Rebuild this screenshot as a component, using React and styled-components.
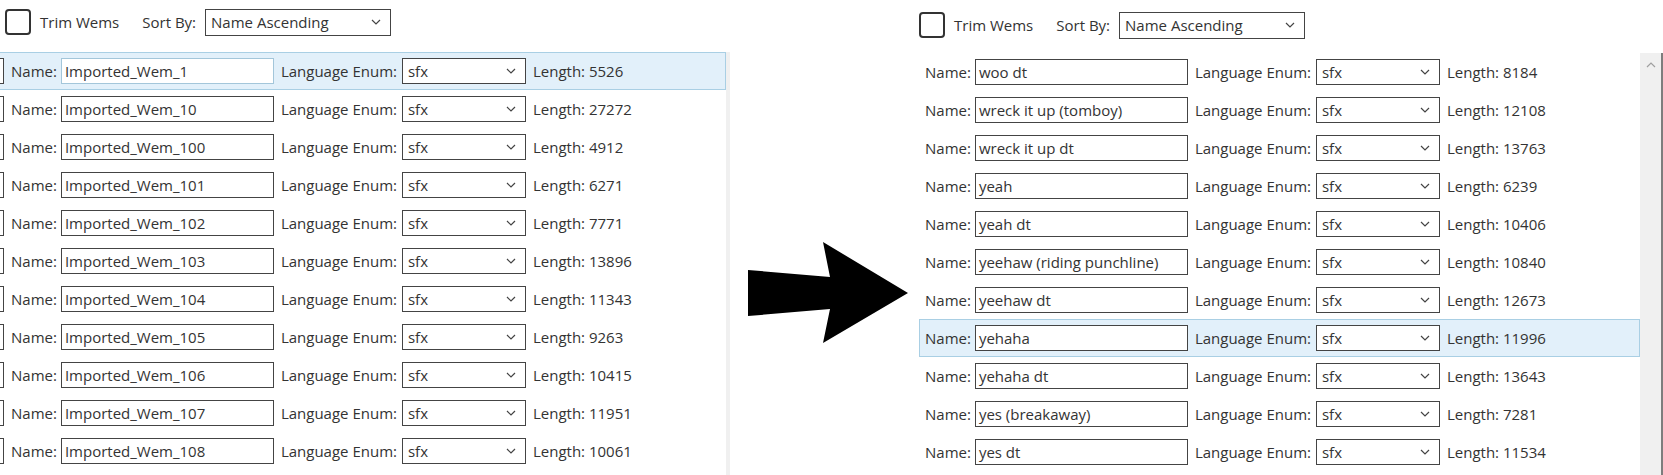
import React from 'react'
import styled, { createGlobalStyle } from 'styled-components'

const GlobalStyle = createGlobalStyle`
	html, body {
		margin: 0;
		padding: 0;
		background: #fff;
		overflow: hidden;
	}
	body {
		font-family: "Open Sans", "Noto Sans", sans-serif;
		font-size: 15px;
		color: #333;
	}
`

const Page = styled.div`
	display: flex;
	height: 475px;
	overflow: hidden;
`

const Panel = styled.div`
	display: flex;
	flex-direction: column;
	width: ${p => p.$width}px;
	padding-top: ${p => p.$top || 0}px;
	flex-shrink: 0;
`

const Toolbar = styled.div`
	display: flex;
	align-items: center;
	height: 44px;
	padding-left: ${p => p.$indent || 0}px;
	margin-bottom: ${p => p.$after}px;
`

const Checkbox = styled.div`
	width: 22px;
	height: 22px;
	border: 2px solid #333;
	border-radius: 4px;
	background: #fff;
	margin-right: 9px;
`

const ToolLabel = styled.span`
	margin-right: ${p => p.$gap || 0}px;
	white-space: nowrap;
`

const FakeSelect = styled.div`
	display: flex;
	align-items: center;
	justify-content: space-between;
	box-sizing: border-box;
	width: ${p => p.$width}px;
	height: ${p => p.$height || 26}px;
	border: 1px solid #444;
	background: #fff;
	padding: 0 9px 0 5px;
	margin-right: ${p => p.$gap || 0}px;
	flex-shrink: 0;
`

const List = styled.div`
	display: flex;
	flex: 1;
	min-height: 0;
`

const Rows = styled.div`
	display: flex;
	flex-direction: column;
	width: ${p => p.$width}px;
	flex-shrink: 0;
`

const Row = styled.div`
	display: flex;
	align-items: center;
	box-sizing: border-box;
	height: 38px;
	flex-shrink: 0;
	border: 1px solid ${p => (p.$selected ? '#a9cfe4' : 'transparent')};
	border-left-width: ${p => (p.$clipped ? 0 : 1)}px;
	background: ${p => (p.$selected ? '#e2f0fa' : 'transparent')};
	padding-left: ${p => (p.$clipped ? 0 : 5)}px;
	white-space: nowrap;
`

const Stub = styled.div`
	box-sizing: border-box;
	width: 4px;
	height: 26px;
	border: 1px solid #444;
	border-left: none;
	background: #fff;
	margin-right: 7px;
	flex-shrink: 0;
`

const FieldLabel = styled.span`
	margin-right: ${p => p.$gap}px;
`

const NameInput = styled.div`
	box-sizing: border-box;
	width: 213px;
	height: 26px;
	line-height: 24px;
	padding-left: 3px;
	border: 1px solid ${p => (p.$soft ? '#a3c6da' : '#444')};
	background: #fff;
	margin-right: 7px;
	flex-shrink: 0;
	overflow: hidden;
`

const Scrollbar = styled.div`
	display: flex;
	justify-content: center;
	width: ${p => p.$width}px;
	background: #f0f0f0;
	padding-top: 9px;
	flex-shrink: 0;
`

const Edge = styled.div`
	width: 2px;
	background: #7d7d7d;
	flex-shrink: 0;
`

const ArrowZone = styled.div`
	flex: 1;
	padding: 242px 0 0 18px;
`

const Chevron = ({ up }) => (
	<svg width="10" height="6" viewBox="0 0 10 6">
		<polyline
			points={up ? '1,5 5,1 9,5' : '1,1 5,5 9,1'}
			fill="none"
			stroke={up ? '#a0a0a0' : '#444'}
			strokeWidth="1.2"
		/>
	</svg>
)

const Arrow = () => (
	<svg width="160" height="101" viewBox="0 0 160 101">
		<polygon points="0,28 82,35 75,0 160,51 75,101 82,67 0,74" fill="#000" />
	</svg>
)

const leftItems = [
	['Imported_Wem_1', 5526],
	['Imported_Wem_10', 27272],
	['Imported_Wem_100', 4912],
	['Imported_Wem_101', 6271],
	['Imported_Wem_102', 7771],
	['Imported_Wem_103', 13896],
	['Imported_Wem_104', 11343],
	['Imported_Wem_105', 9263],
	['Imported_Wem_106', 10415],
	['Imported_Wem_107', 11951],
	['Imported_Wem_108', 10061]
]

const rightItems = [
	['woo dt', 8184],
	['wreck it up (tomboy)', 12108],
	['wreck it up dt', 13763],
	['yeah', 6239],
	['yeah dt', 10406],
	['yeehaw (riding punchline)', 10840],
	['yeehaw dt', 12673],
	['yehaha', 11996],
	['yehaha dt', 13643],
	['yes (breakaway)', 7281],
	['yes dt', 11534]
]

const SortToolbar = ({ indent, after }) => (
	<Toolbar $indent={indent} $after={after}>
		<Checkbox />
		<ToolLabel $gap={23}>Trim Wems</ToolLabel>
		<ToolLabel $gap={9}>Sort By:</ToolLabel>
		<FakeSelect $width={186} $height={27}>
			<span>Name Ascending</span>
			<Chevron />
		</FakeSelect>
	</Toolbar>
)

const WemRow = ({ name, length, selected, clipped, softInput }) => (
	<Row $selected={selected} $clipped={clipped}>
		{clipped && <Stub />}
		<FieldLabel $gap={4}>Name:</FieldLabel>
		<NameInput $soft={softInput}>{name}</NameInput>
		<FieldLabel $gap={5}>Language Enum:</FieldLabel>
		<FakeSelect $width={124} $gap={7}>
			<span>sfx</span>
			<Chevron />
		</FakeSelect>
		<span>Length: {length}</span>
	</Row>
)

export default function App() {
	return (
		<>
			<GlobalStyle />
			<Page>
				<Panel $width={730}>
					<SortToolbar indent={5} after={8} />
					<List>
						<Rows $width={726}>
							{leftItems.map(([name, length], i) => (
								<WemRow
									key={name}
									name={name}
									length={length}
									selected={i === 0}
									softInput={i === 0}
									clipped
								/>
							))}
						</Rows>
						<Scrollbar $width={4} />
					</List>
				</Panel>
				<ArrowZone>
					<Arrow />
				</ArrowZone>
				<Panel $width={744} $top={3}>
					<SortToolbar indent={0} after={6} />
					<List>
						<Rows $width={721}>
							{rightItems.map(([name, length], i) => (
								<WemRow key={name} name={name} length={length} selected={i === 7} />
							))}
						</Rows>
						<Scrollbar $width={21}>
							<Chevron up />
						</Scrollbar>
						<Edge />
					</List>
				</Panel>
			</Page>
		</>
	)
}
